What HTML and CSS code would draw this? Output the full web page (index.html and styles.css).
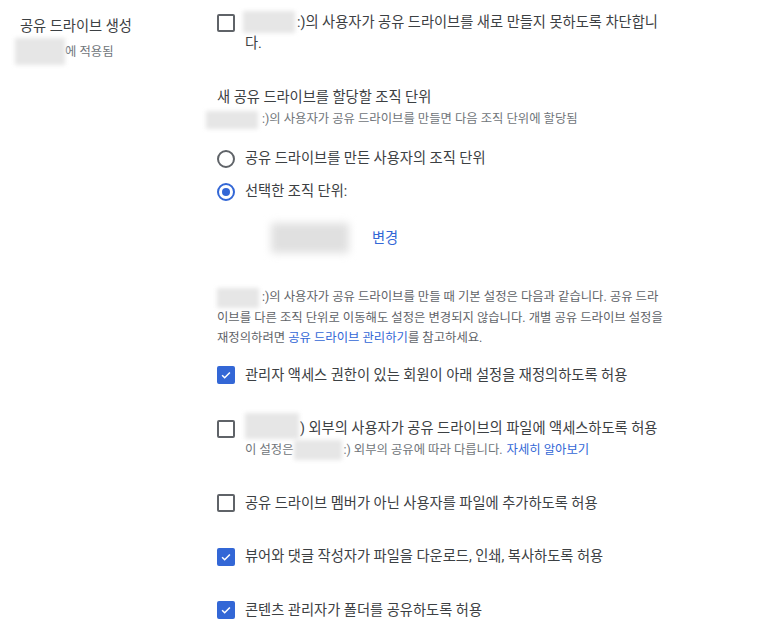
FILE: index.html
```html
<!DOCTYPE html>
<html lang="ko">
<head>
<meta charset="utf-8">
<link rel="stylesheet" href="styles.css">
</head>
<body>
<div class="page">
  <div class="side">
    <div class="side-title">공유 드라이브 생성</div>
    <div class="side-sub"><span class="redact r-side"></span>에 적용됨</div>
  </div>
  <div class="main">
    <div class="check-row first">
      <span class="box"></span>
      <div class="label"><span class="redact r-first"></span>:)의 사용자가 공유 드라이브를 새로 만들지 못하도록 차단합니다.</div>
    </div>

    <div class="heading">새 공유 드라이브를 할당할 조직 단위</div>
    <div class="hint"><span class="redact r-hint"></span>:)의 사용자가 공유 드라이브를 만들면 다음 조직 단위에 할당됨</div>

    <div class="radios">
      <div class="radio-row"><span class="radio"></span><span class="label">공유 드라이브를 만든 사용자의 조직 단위</span></div>
      <div class="radio-row"><span class="radio on"></span><span class="label">선택한 조직 단위:</span></div>
    </div>

    <div class="ou-row">
      <span class="redact r-ou"></span>
      <a class="link change">변경</a>
    </div>

    <p class="para"><span class="redact r-para"></span>:)의 사용자가 공유 드라이브를 만들 때 기본 설정은 다음과 같습니다. 공유 드라이브를 다른 조직 단위로 이동해도 설정은 변경되지 않습니다. 개별 공유 드라이브 설정을 재정의하려면 <a class="link">공유 드라이브 관리하기</a>를 참고하세요.</p>

    <div class="options">
      <div class="opt">
        <div class="check-row"><span class="box on"><svg viewBox="0 0 18 18"><path d="M4 9.3l3.3 3.2L14 5.8" /></svg></span><div class="label">관리자 액세스 권한이 있는 회원이 아래 설정을 재정의하도록 허용</div></div>
      </div>
      <div class="opt">
        <div class="check-row"><span class="box"></span><div class="label"><span class="redact r-ext"></span>) 외부의 사용자가 공유 드라이브의 파일에 액세스하도록 허용</div></div>
        <div class="opt-hint">이 설정은<span class="redact r-ext2"></span>:) 외부의 공유에 따라 다릅니다. <a class="link">자세히 알아보기</a></div>
      </div>
      <div class="opt">
        <div class="check-row"><span class="box"></span><div class="label">공유 드라이브 멤버가 아닌 사용자를 파일에 추가하도록 허용</div></div>
      </div>
      <div class="opt">
        <div class="check-row"><span class="box on"><svg viewBox="0 0 18 18"><path d="M4 9.3l3.3 3.2L14 5.8" /></svg></span><div class="label">뷰어와 댓글 작성자가 파일을 다운로드, 인쇄, 복사하도록 허용</div></div>
      </div>
      <div class="opt">
        <div class="check-row"><span class="box on"><svg viewBox="0 0 18 18"><path d="M4 9.3l3.3 3.2L14 5.8" /></svg></span><div class="label">콘텐츠 관리자가 폴더를 공유하도록 허용</div></div>
      </div>
    </div>
  </div>
</div>
</body>
</html>
```

FILE: styles.css
```css
* { box-sizing: border-box; }
html, body { margin: 0; background: #fff; }
body {
  font-family: Roboto, "Noto Sans CJK KR", sans-serif;
  color: #3c4043;
  font-size: 14.25px;
  line-height: 21px;
}
.page {
  display: grid;
  grid-template-columns: 197px 449px;
  padding-left: 20px;
}
.side { padding-top: 16px; }
.side-title { font-size: 14.25px; line-height: 21px; color: #3c4043; }
.side-sub {
  margin-top: 1px;
  font-size: 12.35px;
  line-height: 20px;
  color: #70757a;
  display: flex;
  align-items: center;
}
.redact {
  display: inline-block;
  background: #e6e6e6;
  filter: blur(2px);
  vertical-align: middle;
}
.r-side { width: 50px; height: 27px; margin-left: -5px; margin-right: 0; }
.r-first { width: 52px; height: 22px; margin-right: 2px; margin-top: -3px; margin-left: -2px; }
.r-hint { width: 52px; height: 18px; margin-left: -11px; margin-right: 4px; }
.r-ou { width: 78px; height: 30px; background: #e0e0e0; filter: blur(4px); }
.r-para { width: 42px; height: 20px; margin-right: 3px; }
.r-ext { width: 54px; height: 26px; margin-right: 1px; margin-top: -6px; }
.r-ext2 { width: 48px; height: 20px; margin-right: 2px; }

.main { padding-top: 12px; }
.check-row { display: flex; align-items: flex-start; gap: 10px; }
.box {
  flex: none;
  width: 18px; height: 18px;
  margin-top: 1.5px;
  border: 2px solid #5f6368;
  border-radius: 2px;
  display: flex;
}
.box.on { background: #3367d6; border-color: #3367d6; }
.box svg { width: 14px; height: 14px; }
.box svg path { fill: none; stroke: #fff; stroke-width: 2; }
.label { flex: 1; }

.heading { margin-top: 33px; }
.hint {
  margin-top: 1px;
  font-size: 12.35px;
  line-height: 20px;
  color: #70757a;
}
.radios { margin-top: 19px; display: flex; flex-direction: column; gap: 12px; }
.radio-row { display: flex; align-items: center; gap: 10px; }
.radio {
  flex: none;
  width: 18px; height: 18px;
  border: 2px solid #5f6368;
  border-radius: 50%;
  display: flex; align-items: center; justify-content: center;
}
.radio.on { border-color: #3367d6; }
.radio.on::after {
  content: "";
  width: 8px; height: 8px;
  border-radius: 50%;
  background: #3367d6;
}
.ou-row {
  margin-top: 18px;
  height: 36px;
  display: flex;
  align-items: center;
  padding-left: 54px;
  gap: 23px;
}
.link { color: #3367d6; text-decoration: none; }
.para {
  margin: 31px 0 0;
  font-size: 12.35px;
  line-height: 20px;
  color: #5f6368;
}
.options { margin-top: 17px; display: flex; flex-direction: column; gap: 32.5px; }
.opt-hint {
  margin-top: 1px;
  margin-left: 28px;
  font-size: 12.35px;
  line-height: 20px;
  color: #70757a;
  display: flex; align-items: center;
}
.opt-hint .link { margin-left: 4px; }
```
